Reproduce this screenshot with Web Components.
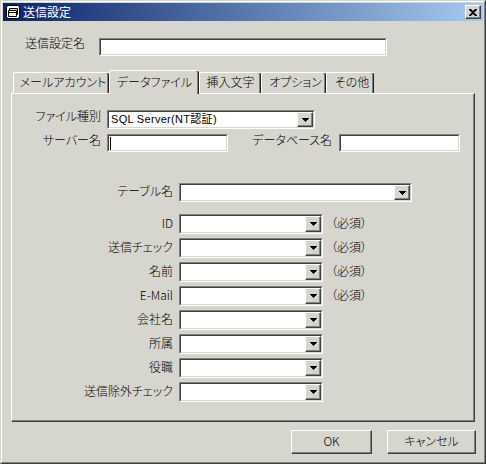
<!DOCTYPE html>
<html lang="ja"><head><meta charset="utf-8"><title>送信設定</title>
<style>
html,body{margin:0;padding:0;background:#d6d5ce}
body{width:486px;height:464px;overflow:hidden;font:300 12px/14px "Noto Sans CJK JP","Liberation Sans",sans-serif;color:#000;font-feature-settings:"palt"}
</style></head><body>
<send-dialog>
  <title-bar slot="title">送信設定</title-bar>
  <name-row>
    <field-label w="74" gap="14" up="4">送信設定名</field-label>
    <sunken-input w="288" h="18"></sunken-input>
  </name-row>
  <tab-strip>
    <win-tab w="96" pad="3">メールアカウント</win-tab>
    <win-tab w="90" active>データファイル</win-tab>
    <win-tab w="62">挿入文字</win-tab>
    <win-tab w="65" pad="3">オプション</win-tab>
    <win-tab w="48" pad="3">その他</win-tab>
  </tab-strip>
  <tab-panel>
    <form-row top="0"><field-label w="88" up="4">ファイル種別</field-label><combo-box w="208" h="19" value="SQL Server(NT認証)"></combo-box></form-row>
    <form-row top="5"><field-label w="88" up="3">サーバー名</field-label><sunken-input w="121" h="18" caret></sunken-input><field-label w="104" gap="7" up="3">データベース名</field-label><sunken-input w="121" h="18"></sunken-input></form-row>
    <form-row top="31"><field-label w="160" up="2">テーブル名</field-label><combo-box w="233" h="19"></combo-box></form-row>
    <form-row top="12"><field-label w="160" up="1">ID</field-label><combo-box w="144" h="20"></combo-box><req-note>（必須）</req-note></form-row>
    <form-row top="4"><field-label w="160" up="1">送信チェック</field-label><combo-box w="144" h="20"></combo-box><req-note>（必須）</req-note></form-row>
    <form-row top="4"><field-label w="160" up="1">名前</field-label><combo-box w="144" h="20"></combo-box><req-note>（必須）</req-note></form-row>
    <form-row top="4"><field-label w="160" up="1">E-Mail</field-label><combo-box w="144" h="20"></combo-box><req-note>（必須）</req-note></form-row>
    <form-row top="4"><field-label w="160" up="1">会社名</field-label><combo-box w="144" h="20"></combo-box></form-row>
    <form-row top="4"><field-label w="160" up="1">所属</field-label><combo-box w="144" h="20"></combo-box></form-row>
    <form-row top="4"><field-label w="160" up="1">役職</field-label><combo-box w="144" h="20"></combo-box></form-row>
    <form-row top="4"><field-label w="160" up="1">送信除外チェック</field-label><combo-box w="144" h="20"></combo-box></form-row>
  </tab-panel>
  <button-bar>
    <win-button w="81">OK</win-button>
    <win-button w="89">キャンセル</win-button>
  </button-bar>
</send-dialog>
<script>
const FACE='#d6d5ce';
const RAISED=`border:1px solid;border-color:#fff #404040 #404040 #fff;box-shadow:inset -1px -1px 0 #808080;background:${FACE};box-sizing:border-box;`;
function def(name,css,html,init){
  customElements.define(name,class extends HTMLElement{
    constructor(){super();this.attachShadow({mode:'open'}).innerHTML=`<style>${css}</style>${html}`;}
    connectedCallback(){if(init)init(this);}
  });
}
def('send-dialog',`:host{display:flex;flex-direction:column;box-sizing:border-box;width:486px;height:464px;background:${FACE};border:1px solid;border-color:${FACE} #404040 #404040 ${FACE}}
.a{flex:1;display:flex;flex-direction:column;border:1px solid;border-color:#fff #808080 #808080 #fff;padding:1px}`,
`<div class="a"><slot name="title"></slot><slot></slot></div>`);
def('title-bar',`:host{display:flex;align-items:center;height:18px;background:linear-gradient(90deg,#0a246a,#a6caf0);color:#fff;flex:none}
svg{display:block;margin:0 3px 0 3px;flex:none}
.t{flex:1;line-height:18px;white-space:nowrap;font-feature-settings:normal;font-weight:400}
.x{width:16px;height:14px;margin-right:2px;display:flex;align-items:center;justify-content:center;${RAISED}}`,
`<svg width="14" height="14" viewBox="0 0 14 14"><rect x="0.5" y="0.5" width="13" height="13" rx="2" fill="#fff" stroke="#000"/><path d="M3.500 3.500h8v6h-8z" fill="${FACE}" stroke="#000"/><path d="M2.500 5.500h8v6h-8z" fill="#fff8dc" stroke="#000"/><path d="M2.500 7.500h8" stroke="#000"/></svg><span class="t"><slot></slot></span><span class="x"><svg style="margin:0" width="8" height="7" viewBox="0 0 8 7"><path d="M0 0h2l2 2 2-2h2v1L5 3.500 8 6v1H6L4 5 2 7H0V6l3-2.500L0 1z" fill="#000"/></svg></span>`);
def('name-row',`:host{display:flex;align-items:center;padding:17px 0 0 8px;flex:none}`,`<slot></slot>`);
def('field-label',`:host{display:block;flex:none;text-align:right;white-space:nowrap;box-sizing:border-box;line-height:14px}`,`<slot></slot>`,
 e=>{e.style.width=e.getAttribute('w')+'px';e.style.marginRight=(e.getAttribute('gap')||6)+'px';e.style.marginTop=(-2*(parseFloat(e.getAttribute('up'))||0))+'px';});
const SUNK=`box-sizing:border-box;border:1px solid;border-color:#808080 #fff #fff #808080;background:#fff;`;
const INNER=`display:flex;box-sizing:border-box;height:100%;border:1px solid;border-color:#404040 ${FACE} ${FACE} #404040;background:#fff;`;
def('sunken-input',`:host{display:block;flex:none;${SUNK}}.i{${INNER}align-items:center;padding-left:1px}
.c{width:1px;height:13px;background:#000;display:none}:host([caret]) .c{display:block}`,`<div class="i"><span class="c"></span></div>`,
 e=>{e.style.width=e.getAttribute('w')+'px';e.style.height=e.getAttribute('h')+'px';});
def('combo-box',`:host{display:block;flex:none;${SUNK}}.i{${INNER}align-items:stretch}
.v{flex:1;padding-left:2px;font:400 11px/15px "Liberation Sans","Noto Sans CJK JP",sans-serif;white-space:nowrap;overflow:hidden;letter-spacing:.3px;font-feature-settings:normal}
.b{flex:none;width:16px;display:flex;align-items:center;justify-content:center;${RAISED}}
.b svg{display:block}`,
`<div class="i"><span class="v"></span><span class="b"><svg width="7" height="4" viewBox="0 0 7 4"><path d="M0 0h7v1H6v1H5v1H4v1H3V3H2V2H1V1H0z" fill="#000"/></svg></span></div>`,
 e=>{e.style.width=e.getAttribute('w')+'px';e.style.height=e.getAttribute('h')+'px';e.shadowRoot.querySelector('.v').textContent=e.getAttribute('value')||'';});
def('tab-strip',`:host{display:flex;align-items:flex-end;height:24px;padding:14px 0 0 10px;margin-bottom:-1px;position:relative;z-index:1;flex:none}`,`<slot></slot>`);
def('win-tab',`:host{display:flex;align-items:center;justify-content:center;box-sizing:border-box;height:21px;white-space:nowrap;flex:none;padding-bottom:2px;background:${FACE};border:solid #fff;border-width:1px 0 0 1px;border-radius:2px 2px 0 0;box-shadow:inset -1px 0 0 #202020,inset -2px 0 0 #808080;margin-bottom:1px}
:host([active]){height:24px;margin-bottom:0;position:relative;z-index:1;padding-bottom:2px}`,`<slot></slot>`,
 e=>{e.style.width=e.getAttribute('w')+'px';e.style.paddingLeft=(e.getAttribute('pad')||0)+'px';});
def('tab-panel',`:host{display:block;box-sizing:border-box;height:329px;margin:0 8px 0 8px;padding:16px 0 0 0;flex:none;background:${FACE};border:1px solid;border-color:#fff #404040 #404040 #fff;box-shadow:inset -1px -1px 0 #808080}`,`<slot></slot>`);
def('form-row',`:host{display:flex;align-items:center;padding-left:1px}`,`<slot></slot>`,e=>{e.style.marginTop=e.getAttribute('top')+'px';});
def('req-note',`:host{display:block;margin-left:8px;margin-top:-2px;white-space:nowrap}`,`<slot></slot>`);
def('button-bar',`:host{display:flex;justify-content:flex-end;gap:15px;padding:8px 7px 0 0;flex:none}`,`<slot></slot>`);
def('win-button',`:host{display:flex;align-items:center;justify-content:center;height:24px;flex:none;padding-bottom:2px;${RAISED}}`,`<slot></slot>`,
 e=>{e.style.width=e.getAttribute('w')+'px';});
</script>
</body></html>
